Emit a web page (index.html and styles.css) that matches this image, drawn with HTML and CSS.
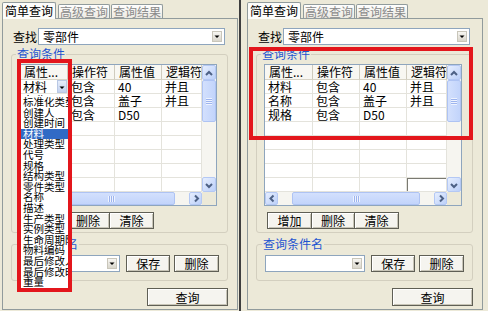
FILE: index.html
```html
<!DOCTYPE html>
<html lang="zh-CN">
  <head>
    <meta charset="utf-8">
    <link rel="stylesheet" href="styles.css">
  </head>
  <body>
    <div class="screen">
      <!-- left shot: attribute dropdown opened -->
      <div class="pane">
        <div class="tabs">
          <span class="tab active">简单查询</span>
          <span class="tab">高级查询</span>
          <span class="tab">查询结果</span>
        </div>
        <div class="page">
          <div class="find">
            <span class="find-label">查找</span>
            <div class="combo combo-find">
              <span class="combo-text">零部件</span>
              <span class="drop"><svg width="8" height="9" viewBox="0 0 8 9"><path d="M1.5 3.5h5l-2.5 2.5z" fill="#000"/></svg></span>
            </div>
          </div>
          <fieldset class="group group-cond">
            <legend>查询条件</legend>
            <div class="table">
              <div class="cells">
                <div class="th">属性...</div><div class="th">操作符</div><div class="th">属性值</div><div class="th">逻辑符</div>
                <div class="td td-combo">材料<span class="cell-drop"><svg width="8" height="9" viewBox="0 0 8 9"><path d="M1.5 3.5h5l-2.5 2.5z" fill="#000"/></svg></span></div><div class="td">包含</div><div class="td">40</div><div class="td">并且</div>
                <div class="td">名称</div><div class="td">包含</div><div class="td">盖子</div><div class="td">并且</div>
                <div class="td">规格</div><div class="td">包含</div><div class="td">D50</div><div class="td"></div>
                <div class="td"></div><div class="td"></div><div class="td"></div><div class="td"></div>
                <div class="td"></div><div class="td"></div><div class="td"></div><div class="td"></div>
                <div class="td"></div><div class="td"></div><div class="td"></div><div class="td"></div>
                <div class="td"></div><div class="td"></div><div class="td"></div><div class="td"></div>
                <div class="td"></div><div class="td"></div><div class="td"></div><div class="td"></div>
              </div>
              <div class="vscroll">
                <span class="sb-btn"><svg width="12" height="13" viewBox="0 0 12 13"><path d="M3 8l3-3 3 3" fill="none" stroke="#4d6185" stroke-width="2"/></svg></span>
                <span class="thumb thumb-v"></span>
                <span class="sb-btn sb-end"><svg width="12" height="13" viewBox="0 0 12 13"><path d="M3 5l3 3 3-3" fill="none" stroke="#4d6185" stroke-width="2"/></svg></span>
              </div>
              <div class="hscroll">
                <span class="sb-btn"><svg width="11" height="11" viewBox="0 0 11 11"><path d="M6.5 2.5l-3 3 3 3" fill="none" stroke="#4d6185" stroke-width="2"/></svg></span>
                <span class="thumb thumb-h"></span>
                <span class="sb-btn sb-end"><svg width="11" height="11" viewBox="0 0 11 11"><path d="M4 2.5l3 3-3 3" fill="none" stroke="#4d6185" stroke-width="2"/></svg></span>
              </div>
              <div class="corner"></div>
            </div>
            <div class="btn-row">
              <button class="btn">增加</button><button class="btn">删除</button><button class="btn">清除</button>
            </div>
          </fieldset>
          <fieldset class="group group-name">
            <legend>查询条件名</legend>
            <div class="name-row">
              <div class="combo combo-name">
                <span class="combo-text"></span>
                <span class="drop"><svg width="8" height="9" viewBox="0 0 8 9"><path d="M1.5 3.5h5l-2.5 2.5z" fill="#000"/></svg></span>
              </div>
              <button class="btn btn-save">保存</button>
              <button class="btn btn-del">删除</button>
            </div>
          </fieldset>
          <div class="foot">
            <button class="btn btn-query">查询</button>
          </div>
        </div>
        <ul class="droplist">
          <li>标准化类型</li>
          <li>创建人</li>
          <li>创建时间</li>
          <li class="sel">材料</li>
          <li>处理类型</li>
          <li>代号</li>
          <li>规格</li>
          <li>结构类型</li>
          <li>零件类型</li>
          <li>名称</li>
          <li>描述</li>
          <li>生产类型</li>
          <li>实例类型</li>
          <li>生命周期阶段</li>
          <li>物料编码</li>
          <li>最后修改人</li>
          <li>最后修改时间</li>
          <li>重量</li>
        </ul>
        <div class="mark mark-left"></div>
      </div>

      <div class="divider"></div>

      <!-- right shot: conditions filled in -->
      <div class="pane">
        <div class="tabs">
          <span class="tab active">简单查询</span>
          <span class="tab">高级查询</span>
          <span class="tab">查询结果</span>
        </div>
        <div class="page">
          <div class="find">
            <span class="find-label">查找</span>
            <div class="combo combo-find">
              <span class="combo-text">零部件</span>
              <span class="drop"><svg width="8" height="9" viewBox="0 0 8 9"><path d="M1.5 3.5h5l-2.5 2.5z" fill="#000"/></svg></span>
            </div>
          </div>
          <fieldset class="group group-cond">
            <legend>查询条件</legend>
            <div class="table">
              <div class="cells">
                <div class="th">属性...</div><div class="th">操作符</div><div class="th">属性值</div><div class="th">逻辑符</div>
                <div class="td">材料</div><div class="td">包含</div><div class="td">40</div><div class="td">并且</div>
                <div class="td">名称</div><div class="td">包含</div><div class="td">盖子</div><div class="td">并且</div>
                <div class="td">规格</div><div class="td">包含</div><div class="td">D50</div><div class="td"></div>
                <div class="td"></div><div class="td"></div><div class="td"></div><div class="td"></div>
                <div class="td"></div><div class="td"></div><div class="td"></div><div class="td"></div>
                <div class="td"></div><div class="td"></div><div class="td"></div><div class="td"></div>
                <div class="td"></div><div class="td"></div><div class="td"></div><div class="td"></div>
                <div class="td"></div><div class="td"></div><div class="td"></div><div class="td edit"></div>
              </div>
              <div class="vscroll">
                <span class="sb-btn"><svg width="12" height="13" viewBox="0 0 12 13"><path d="M3 8l3-3 3 3" fill="none" stroke="#4d6185" stroke-width="2"/></svg></span>
                <span class="thumb thumb-v"></span>
                <span class="sb-btn sb-end"><svg width="12" height="13" viewBox="0 0 12 13"><path d="M3 5l3 3 3-3" fill="none" stroke="#4d6185" stroke-width="2"/></svg></span>
              </div>
              <div class="hscroll">
                <span class="sb-btn"><svg width="11" height="11" viewBox="0 0 11 11"><path d="M6.5 2.5l-3 3 3 3" fill="none" stroke="#4d6185" stroke-width="2"/></svg></span>
                <span class="thumb thumb-h"></span>
                <span class="sb-btn sb-end"><svg width="11" height="11" viewBox="0 0 11 11"><path d="M4 2.5l3 3-3 3" fill="none" stroke="#4d6185" stroke-width="2"/></svg></span>
              </div>
              <div class="corner"></div>
            </div>
            <div class="btn-row">
              <button class="btn">增加</button><button class="btn">删除</button><button class="btn">清除</button>
            </div>
          </fieldset>
          <fieldset class="group group-name">
            <legend>查询条件名</legend>
            <div class="name-row">
              <div class="combo combo-name">
                <span class="combo-text"></span>
                <span class="drop"><svg width="8" height="9" viewBox="0 0 8 9"><path d="M1.5 3.5h5l-2.5 2.5z" fill="#000"/></svg></span>
              </div>
              <button class="btn btn-save">保存</button>
              <button class="btn btn-del">删除</button>
            </div>
          </fieldset>
          <div class="foot">
            <button class="btn btn-query">查询</button>
          </div>
        </div>
        <div class="mark mark-right"></div>
      </div>
    </div>
  </body>
</html>
```

FILE: styles.css
```css
* {
  box-sizing: border-box;
}

body {
  margin: 0;
  background: #ece9d8;
  color: #000;
  font-family: "Noto Sans CJK SC", "Liberation Sans", sans-serif;
  font-size: 12px;
  line-height: 14px;
}

.screen {
  display: flex;
  width: 488px;
  height: 311px;
  padding-left: 2px;
  overflow: hidden;
}

.pane {
  position: relative;
  flex: none;
  width: 236px;
}

.divider {
  flex: none;
  width: 2px;
  margin: 0 6px 0 1px;
  background: #3e3e3e;
}

/* tabs */
.tabs {
  display: flex;
  align-items: flex-end;
  gap: 1px;
  height: 18px;
}

.tab {
  height: 14px;
  padding: 0 1px;
  border: 1px solid #919b9c;
  border-bottom: 0;
  border-radius: 2px 2px 0 0;
  background: linear-gradient(#fefefe, #eceae2);
  color: #8a8a8a;
  line-height: 13px;
}

.tab.active {
  position: relative;
  z-index: 1;
  height: 17px;
  margin-bottom: -1px;
  margin-right: 1px;
  padding: 1px 2px 0;
  background: #fcfcfa;
  color: #000;
}

.page {
  height: 292px;
  padding-top: 9px;
  border: 1px solid #919b9c;
  background: #ece9d8;
}

/* find row */
.find {
  display: flex;
  align-items: center;
  padding-left: 10px;
}

.find-label {
  width: 25px;
}

.combo {
  position: relative;
  height: 17px;
  border: 1px solid #8ea5bd;
  background: #fff;
}

.combo-find {
  width: 187px;
}

.combo-name {
  width: 101px;
}

.combo-text {
  display: block;
  padding-left: 4px;
  line-height: 15px;
}

.drop {
  position: absolute;
  top: 2px;
  right: 2px;
  width: 10px;
  height: 11px;
  border: 1px solid #c9c6ba;
  background: linear-gradient(#f7f6f2, #d9d6cc);
}

.drop svg,
.cell-drop svg,
.sb-btn svg {
  display: block;
}

/* group boxes */
.group {
  min-width: 0;
  margin: 3px 9px 0 8px;
  padding: 4px 10px 3px 7px;
  border: 1px solid #d3cfbf;
  border-radius: 3px;
}

.group legend {
  margin-left: -3px;
  padding: 0 1px;
  color: #1f55d0;
  line-height: 12px;
}

.group-name {
  margin-top: 5px;
  padding: 5px 8px 8px;
}

/* table */
.table {
  display: grid;
  grid-template-columns: 182px 14px;
  grid-template-rows: 127px 13px;
  width: 198px;
  border: 1px solid #8ea5bd;
  background: #fff;
}

.cells {
  display: grid;
  grid-template-columns: 48px 47px 47px 40px;
  grid-template-rows: 15px repeat(8, 14px);
}

.th,
.td {
  position: relative;
  padding-left: 3px;
  border-right: 1px solid #e4e3dc;
  border-bottom: 1px solid #e4e3dc;
  overflow: hidden;
  white-space: nowrap;
  line-height: 13px;
}

.th {
  padding-left: 4px;
  border-right-color: #cfcbbd;
  border-bottom-color: #d8d4c6;
  background: #f8f7f2;
  line-height: 14px;
}

.td.edit {
  box-shadow: inset 1px 1px #7a7a72;
}

.cell-drop {
  position: absolute;
  top: 0;
  right: 0;
  width: 10px;
  height: 13px;
  padding-top: 2px;
  border: 1px solid #b9c8e4;
  background: linear-gradient(#e6edfb, #c3d2ef);
}

/* scrollbars */
.vscroll,
.hscroll {
  display: flex;
  background: #f6f5f0;
}

.vscroll {
  flex-direction: column;
}

.sb-btn {
  flex: none;
  width: 14px;
  height: 15px;
  padding: 1px 0 0;
  border: 1px solid #b4c8f4;
  border-radius: 2px;
  background: linear-gradient(135deg, #e6eefe, #bcd0f9);
}

.hscroll .sb-btn {
  width: 13px;
  height: 13px;
  padding: 0 0 0 1px;
}

.sb-end {
  margin-top: auto;
}

.hscroll .sb-end {
  margin-top: 0;
  margin-left: auto;
}

.thumb {
  position: relative;
  flex: none;
  border: 1px solid #aec3f3;
  border-radius: 2px;
  background: linear-gradient(90deg, #d3e0fd, #c2d4fb);
}

.thumb-v {
  height: 42px;
}

.thumb-h {
  width: 128px;
  margin-left: 14px;
  background: linear-gradient(#d3e0fd, #c2d4fb);
}

.thumb::after {
  content: "";
  position: absolute;
  left: 50%;
  top: 50%;
  width: 6px;
  height: 7px;
  margin: -3px 0 0 -3px;
  background: repeating-linear-gradient(#eef3fe 0 1px, #9db4ee 1px 2px);
}

.thumb-h::after {
  width: 7px;
  height: 6px;
  background: repeating-linear-gradient(90deg, #eef3fe 0 1px, #9db4ee 1px 2px);
}

.corner {
  background: #ece9d8;
}

/* buttons */
.btn {
  height: 17px;
  padding: 0;
  border: 1px solid #5f5f55;
  background: #f5f4ef;
  box-shadow: inset 1px 1px #fff, inset -1px -1px #c8c5b7;
  color: #000;
  font: inherit;
  line-height: 15px;
}

.btn-row {
  display: flex;
  margin-top: 6px;
  padding-left: 3px;
}

.btn-row .btn {
  width: 45px;
}

.btn-row .btn + .btn {
  width: 44px;
  margin-left: -1px;
}

.btn-row .btn:last-child {
  width: 45px;
}

.name-row {
  display: flex;
}

.btn-save {
  width: 44px;
  margin-left: 6px;
}

.btn-del {
  width: 45px;
  margin-left: 4px;
}

.foot {
  display: flex;
  justify-content: flex-end;
  padding: 7px 9px 0 0;
}

.btn-query {
  width: 81px;
  height: 18px;
}

/* opened attribute list + red annotation boxes */
.droplist {
  position: absolute;
  z-index: 2;
  left: 19px;
  top: 96px;
  width: 47px;
  height: 193px;
  margin: 0;
  padding: 1px 0 0;
  list-style: none;
  background: #fff;
  overflow: hidden;
  font-size: 10.5px;
  line-height: 10.6px;
}

.droplist li {
  display: block;
  height: 10.6px;
  padding-left: 2px;
  overflow: hidden;
  white-space: nowrap;
  line-height: 10.6px;
}

.droplist .sel {
  background: #316ac5;
  color: #fff;
}

.mark {
  position: absolute;
  z-index: 3;
  border: 4px solid #e3161c;
}

.mark-left {
  left: 15px;
  top: 59px;
  width: 55px;
  height: 233px;
}

.mark-right {
  left: 2px;
  top: 47px;
  width: 224px;
  height: 93px;
}
```
